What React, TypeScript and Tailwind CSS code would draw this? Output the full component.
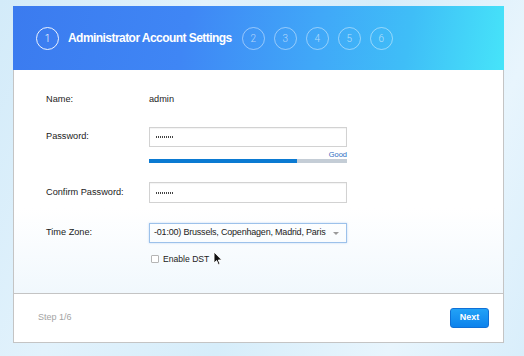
import React from 'react'

const steps = [2, 3, 4, 5, 6]

const font = { fontFamily: '"Liberation Sans", Arial, sans-serif' }

const Circle = ({ n, active }: { n: number; active?: boolean }) => (
  <div
    className={`w-[23px] h-[23px] rounded-full border flex items-center justify-center text-[10px] font-light ${
      active ? 'border-white/90 text-white' : 'border-white/45 text-white/60'
    }`}
    style={{ fontFamily: 'Roboto, sans-serif' }}
  >
    {n}
  </div>
)

const Cursor = () => (
  <svg className="absolute left-[213px] top-[251px]" width="10" height="15" viewBox="0 0 10 15">
    <path d="M1 1 L1 12 L3.6 9.6 L5.4 13.8 L7 13.1 L5.3 9 L8.8 9 Z" fill="#111" stroke="#fff" strokeWidth="0.9" />
  </svg>
)

const Dots = () => (
  <div className="flex gap-[1px]">
    {[0, 1, 2, 3, 4, 5, 6, 7, 8].map((i) => (
      <span key={i} className="w-[1px] h-[2px] bg-[#444]" />
    ))}
  </div>
)

export default function App() {
  return (
    <div
      className="relative w-[524px] h-[356px] overflow-hidden pt-[6px] text-[9.2px]"
      style={{
        ...font,
        background:
          'linear-gradient(115deg, #d3ebf9 0%, #e2f2fc 30%, #d6edfa 55%, #e8f5fd 80%, #d9eefb 100%)',
      }}
    >
      <div className="ml-[13px] w-[491px] flex flex-col">
        {/* header */}
        <div
          className="h-[64px] flex items-center pl-[23px] gap-[9px]"
          style={{
            background:
              'linear-gradient(100deg, #3b7bef 0%, #3f86f5 35%, #40a8f8 62%, #3fbef7 80%, #46e4f9 100%)',
          }}
        >
          <Circle n={1} active />
          <span className="text-white text-[12px] font-bold tracking-[-0.55px] mr-[1px] whitespace-nowrap">
            Administrator Account Settings
          </span>
          {steps.map((n) => (
            <Circle key={n} n={n} />
          ))}
        </div>

        {/* body */}
        <div
          className="h-[223px] border-x border-[#c4c4c4] pl-[32px] pt-[20px]"
          style={{ background: 'linear-gradient(180deg, #ffffff 0%, #ffffff 62%, #f1f8fd 100%)' }}
        >
          <div className="flex items-center h-[20px] text-[#222]">
            <span className="w-[103px]">Name:</span>
            <span>admin</span>
          </div>

          <div className="flex items-center h-[20px] mt-[17px] text-[#222]">
            <span className="w-[103px]">Password:</span>
            <div className="w-[198px] h-[20px] border border-[#d2d2d2] shadow-[inset_0_1px_1px_rgba(0,0,0,0.05)] flex items-center pl-[6px]">
              <Dots />
            </div>
          </div>
          <div className="ml-[103px] w-[198px] mt-[3px] flex flex-col">
            <span className="self-end text-[7.5px] text-[#2b6cc2] leading-[9px]">Good</span>
            <div className="h-[4px] bg-[#c4cdd6] flex">
              <div className="w-[148px] bg-[#0b7ad2]" />
            </div>
          </div>

          <div className="flex items-center h-[21px] mt-[19px] text-[#222]">
            <span className="w-[103px] whitespace-nowrap">Confirm Password:</span>
            <div className="w-[198px] h-[21px] border border-[#d2d2d2] shadow-[inset_0_1px_1px_rgba(0,0,0,0.05)] flex items-center pl-[6px]">
              <Dots />
            </div>
          </div>

          <div className="flex items-center h-[20px] mt-[20px] text-[#222]">
            <span className="w-[103px]">Time Zone:</span>
            <div className="w-[198px] h-[20px] border border-[#9cc1ea] shadow-[0_0_2px_rgba(80,150,230,0.35)] flex items-center justify-between pl-[4px] pr-[7px] overflow-hidden">
              <span className="whitespace-nowrap text-[9px] tracking-[-0.2px]">-01:00) Brussels, Copenhagen, Madrid, Paris</span>
              <span className="w-0 h-0 shrink-0 border-x-[3px] border-x-transparent border-t-[3px] border-t-[#9a9a9a]" />
            </div>
          </div>

          <div className="flex items-center ml-[105px] mt-[10px] gap-[4px] text-[#222]">
            <div className="w-[8px] h-[8px] border border-[#b5b5b5] rounded-[1px] bg-white" />
            <span className="text-[8.6px]">Enable DST</span>
          </div>
        </div>

        {/* footer */}
        <div className="h-[50px] bg-white border border-[#c4c4c4] flex items-center justify-between pl-[24px] pr-[14px]">
          <span className="text-[9px] text-[#a3a3a3]">Step 1/6</span>
          <button
            className="w-[39px] h-[20px] rounded-[3px] border border-[#1070d6] text-white text-[9px] font-bold"
            style={{ background: 'linear-gradient(180deg, #22a2f7 0%, #0c82ec 100%)' }}
          >
            Next
          </button>
        </div>
      </div>
      <Cursor />
    </div>
  )
}
